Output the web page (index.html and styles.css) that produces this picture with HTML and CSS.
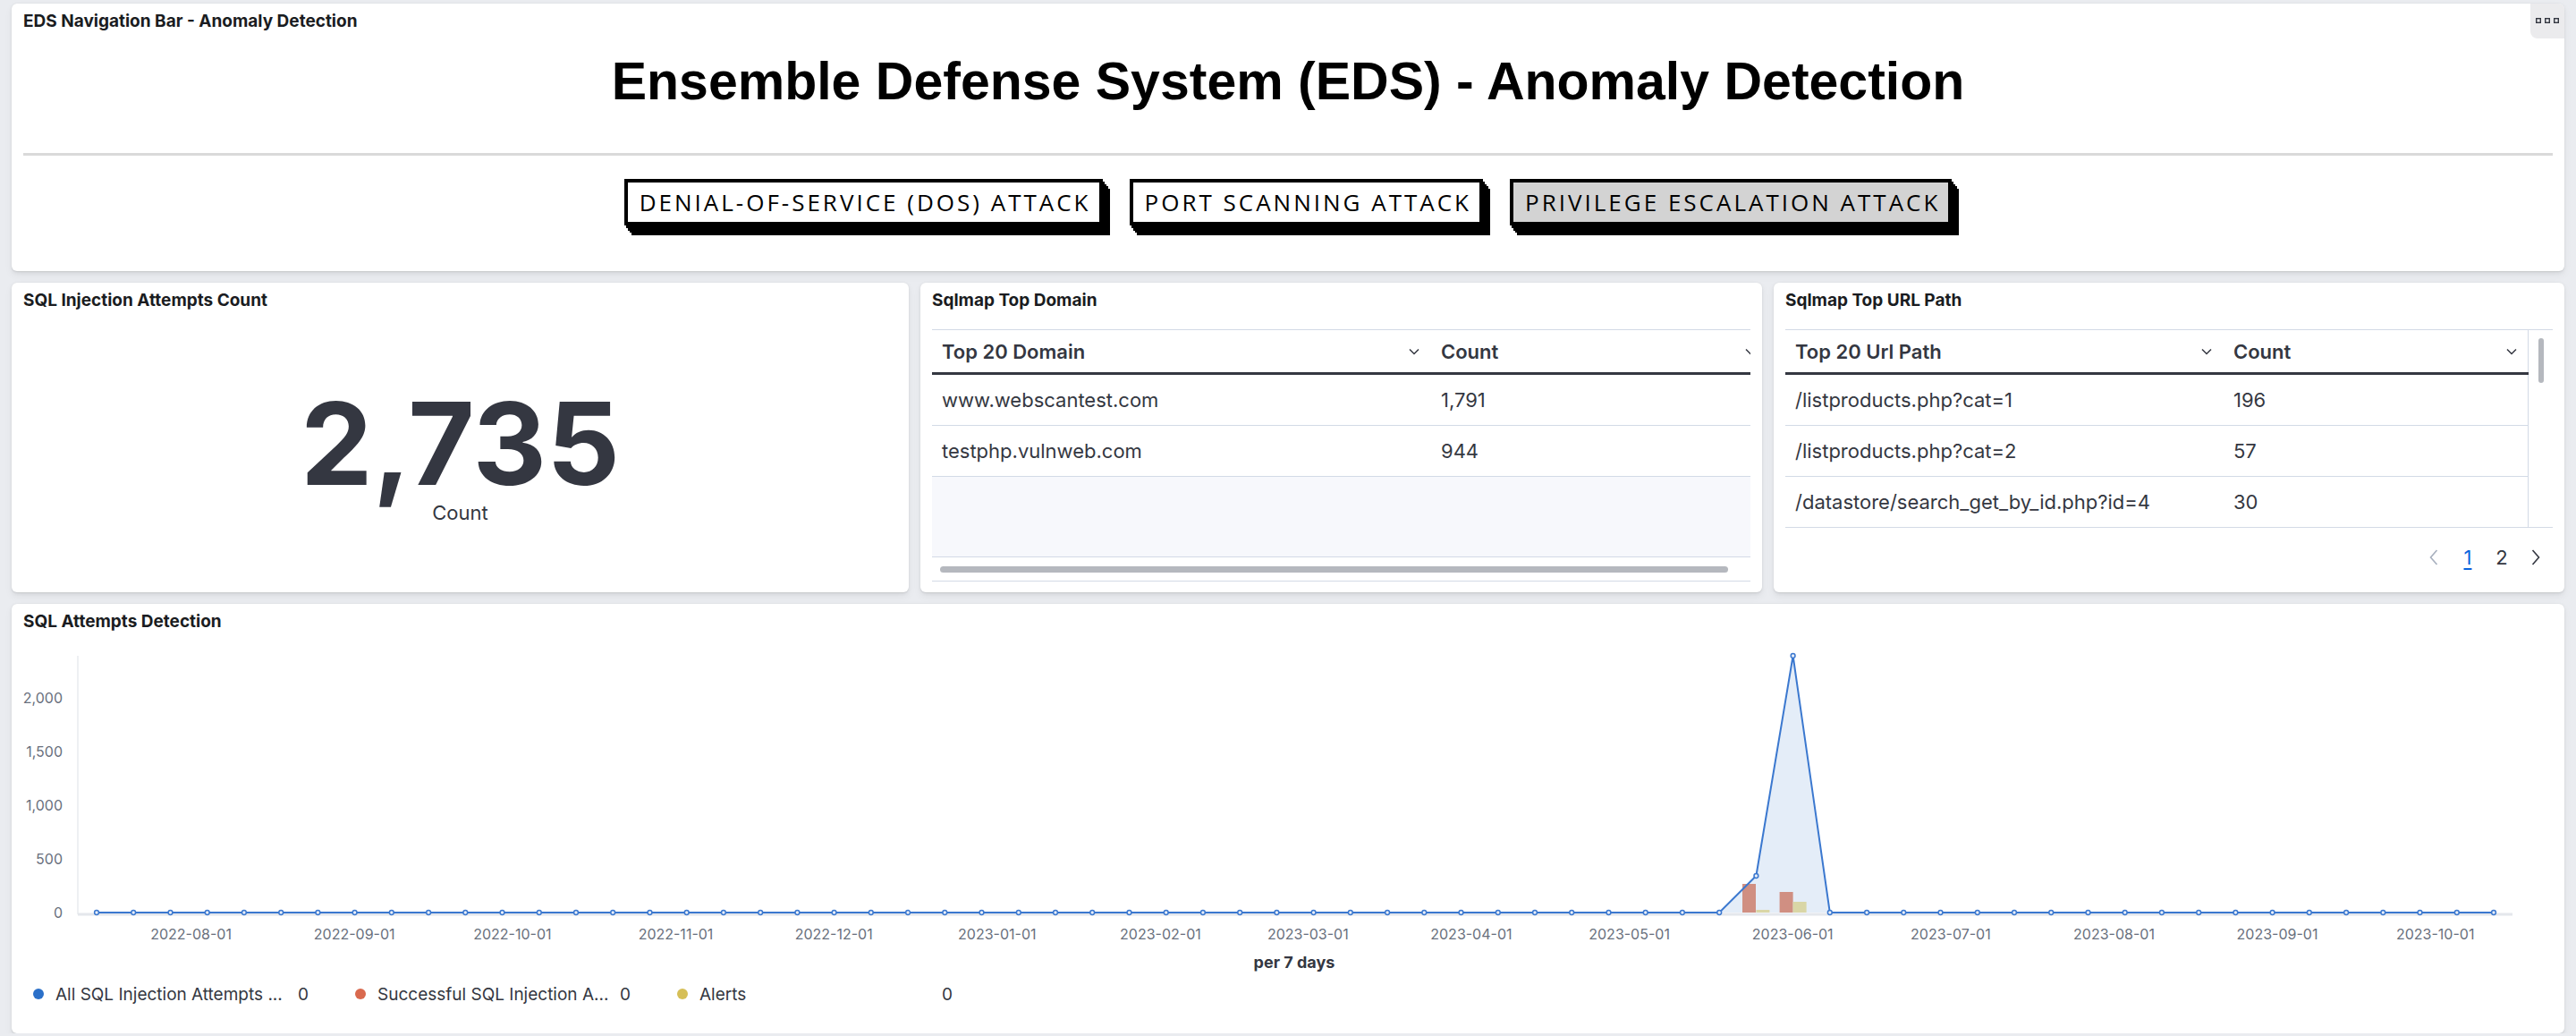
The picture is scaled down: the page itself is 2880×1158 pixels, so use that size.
FILE: index.html
```html
<!DOCTYPE html>
<html lang="en">
<head>
  <meta charset="UTF-8" />
  <meta name="viewport" content="width=device-width, initial-scale=1.0" />
  <title>EDS - Anomaly Detection</title>
  <link rel="stylesheet" href="styles.css">
</head>
<body>
  <div class="dashboard">

    <!-- navigation markdown panel -->
    <section class="panel nav-panel">
      <div class="panel-title">EDS Navigation Bar - Anomaly Detection</div>
      <button class="panel-menu" aria-label="Panel options">
        <svg width="26" height="6" viewBox="0 0 26 6">
          <rect x="0.7" y="0.7" width="4.6" height="4.6" fill="none" stroke="#343741" stroke-width="1.4"/>
          <rect x="10.7" y="0.7" width="4.6" height="4.6" fill="none" stroke="#343741" stroke-width="1.4"/>
          <rect x="20.7" y="0.7" width="4.6" height="4.6" fill="none" stroke="#343741" stroke-width="1.4"/>
        </svg>
      </button>
      <h1 class="nav-heading">Ensemble Defense System (EDS) - Anomaly Detection</h1>
      <hr class="nav-rule">
      <div class="nav-buttons">
        <a class="nav-btn" href="#">DENIAL-OF-SERVICE (DOS) ATTACK</a>
        <a class="nav-btn" href="#">PORT SCANNING ATTACK</a>
        <a class="nav-btn active" href="#">PRIVILEGE ESCALATION ATTACK</a>
      </div>
    </section>

    <div class="row">
      <!-- metric -->
      <section class="panel">
        <div class="panel-title">SQL Injection Attempts Count</div>
        <div class="metric">
          <div class="metric-value">2,735</div>
          <div class="metric-label">Count</div>
        </div>
      </section>

      <!-- top domain table -->
      <section class="panel">
        <div class="panel-title">Sqlmap Top Domain</div>
        <div class="grid-box domain-box">
          <div class="grid domain-grid">
            <div class="cell head">Top 20 Domain
              <svg class="chev" width="12" height="8" viewBox="0 0 12 8"><path d="M1 1.5l5 5 5-5" fill="none" stroke="#343741" stroke-width="1.5"/></svg>
            </div>
            <div class="cell head">Count
              <svg class="chev" width="12" height="8" viewBox="0 0 12 8"><path d="M1 1.5l5 5 5-5" fill="none" stroke="#343741" stroke-width="1.5"/></svg>
            </div>
            <div class="cell">www.webscantest.com</div>
            <div class="cell">1,791</div>
            <div class="cell">testphp.vulnweb.com</div>
            <div class="cell">944</div>
          </div>
          <div class="grid-empty"></div>
          <div class="hscroll"><span class="hscroll-thumb"></span></div>
        </div>
      </section>

      <!-- top url table -->
      <section class="panel">
        <div class="panel-title">Sqlmap Top URL Path</div>
        <div class="grid-box url-box">
          <div class="grid url-grid">
            <div class="cell head">Top 20 Url Path
              <svg class="chev" width="12" height="8" viewBox="0 0 12 8"><path d="M1 1.5l5 5 5-5" fill="none" stroke="#343741" stroke-width="1.5"/></svg>
            </div>
            <div class="cell head">Count
              <svg class="chev" width="12" height="8" viewBox="0 0 12 8"><path d="M1 1.5l5 5 5-5" fill="none" stroke="#343741" stroke-width="1.5"/></svg>
            </div>
            <div class="cell">/listproducts.php?cat=1</div>
            <div class="cell">196</div>
            <div class="cell">/listproducts.php?cat=2</div>
            <div class="cell">57</div>
            <div class="cell last">/datastore/search_get_by_id.php?id=4</div>
            <div class="cell last">30</div>
          </div>
          <div class="vscroll"><span class="vscroll-thumb"></span></div>
        </div>
        <div class="pager">
          <span class="pager-item disabled">
            <svg width="10" height="18" viewBox="0 0 10 18"><path d="M8.5 1L1.5 9l7 8" fill="none" stroke="currentColor" stroke-width="1.6"/></svg>
          </span>
          <span class="pager-item current">1</span>
          <span class="pager-item">2</span>
          <span class="pager-item">
            <svg width="10" height="18" viewBox="0 0 10 18"><path d="M1.5 1l7 8-7 8" fill="none" stroke="currentColor" stroke-width="1.6"/></svg>
          </span>
        </div>
      </section>
    </div>

    <!-- time series -->
    <section class="panel chart-panel">
      <div class="panel-title">SQL Attempts Detection</div>
      <svg class="chart" width="2854" height="389" viewBox="13 706 2854 389">
        <defs>
          <marker id="pt" viewBox="-4 -4 8 8" markerWidth="8" markerHeight="8" markerUnits="userSpaceOnUse">
            <circle r="2.4" fill="#e8eef8" stroke="#3b78cf" stroke-width="1.5"/>
          </marker>
        </defs>

        <line x1="87" y1="733" x2="87" y2="1022" stroke="#eef0f3" stroke-width="2"/>
        <line x1="87" y1="1022" x2="2809" y2="1022" stroke="#e4e7ec" stroke-width="3"/>

        <g class="axis-label" text-anchor="end">
          <text x="70" y="780" dominant-baseline="central">2,000</text>
          <text x="70" y="840" dominant-baseline="central">1,500</text>
          <text x="70" y="900" dominant-baseline="central">1,000</text>
          <text x="70" y="960" dominant-baseline="central">500</text>
          <text x="70" y="1020" dominant-baseline="central">0</text>
        </g>

        <polygon points="1922.2,1020 1963.4,979 2004.6,733 2045.8,1020" fill="#e4edf8"/>

        <rect x="1948" y="988" width="15" height="32" fill="#d08f82"/>
        <rect x="1963.4" y="1017" width="15" height="3" fill="#d9d6a6"/>
        <rect x="1989.6" y="997" width="15" height="23" fill="#d08f82"/>
        <rect x="2004.6" y="1008" width="15" height="12" fill="#d9d6a6"/>

        <polyline fill="none" stroke="#3b78cf" stroke-width="2" stroke-linejoin="round"
          marker-start="url(#pt)" marker-mid="url(#pt)" marker-end="url(#pt)"
          points="108,1020 149.2,1020 190.5,1020 231.7,1020 272.9,1020 314.2,1020 355.4,1020 396.6,1020 437.8,1020 479.1,1020
                  520.3,1020 561.5,1020 602.8,1020 644,1020 685.2,1020 726.5,1020 767.7,1020 808.9,1020 850.2,1020 891.4,1020
                  932.6,1020 973.8,1020 1015.1,1020 1056.3,1020 1097.5,1020 1138.8,1020 1180,1020 1221.2,1020 1262.5,1020 1303.7,1020
                  1344.9,1020 1386.2,1020 1427.4,1020 1468.6,1020 1509.8,1020 1551.1,1020 1592.3,1020 1633.5,1020 1674.8,1020 1716,1020
                  1757.2,1020 1798.5,1020 1839.7,1020 1880.9,1020 1922.2,1020 1963.4,979 2004.6,733 2045.8,1020 2087.1,1020 2128.3,1020
                  2169.5,1020 2210.8,1020 2252,1020 2293.2,1020 2334.5,1020 2375.7,1020 2416.9,1020 2458.2,1020 2499.4,1020 2540.6,1020
                  2581.8,1020 2623.1,1020 2664.3,1020 2705.5,1020 2746.8,1020 2788,1020"/>

        <g class="axis-label" text-anchor="middle">
          <text x="213.6" y="1044" dominant-baseline="central">2022-08-01</text>
          <text x="396.2" y="1044" dominant-baseline="central">2022-09-01</text>
          <text x="572.9" y="1044" dominant-baseline="central">2022-10-01</text>
          <text x="755.5" y="1044" dominant-baseline="central">2022-11-01</text>
          <text x="932.2" y="1044" dominant-baseline="central">2022-12-01</text>
          <text x="1114.8" y="1044" dominant-baseline="central">2023-01-01</text>
          <text x="1297.4" y="1044" dominant-baseline="central">2023-02-01</text>
          <text x="1462.3" y="1044" dominant-baseline="central">2023-03-01</text>
          <text x="1644.9" y="1044" dominant-baseline="central">2023-04-01</text>
          <text x="1821.6" y="1044" dominant-baseline="central">2023-05-01</text>
          <text x="2004.2" y="1044" dominant-baseline="central">2023-06-01</text>
          <text x="2180.9" y="1044" dominant-baseline="central">2023-07-01</text>
          <text x="2363.5" y="1044" dominant-baseline="central">2023-08-01</text>
          <text x="2546" y="1044" dominant-baseline="central">2023-09-01</text>
          <text x="2722.7" y="1044" dominant-baseline="central">2023-10-01</text>
        </g>
        <text class="axis-title" x="1447" y="1075" text-anchor="middle" dominant-baseline="central">per 7 days</text>
      </svg>

      <div class="legend">
        <div class="legend-item">
          <span class="legend-dot blue"></span>
          <span class="legend-name">All SQL Injection Attempts ...</span>
          <span class="legend-value">0</span>
        </div>
        <div class="legend-item">
          <span class="legend-dot red"></span>
          <span class="legend-name">Successful SQL Injection A...</span>
          <span class="legend-value">0</span>
        </div>
        <div class="legend-item">
          <span class="legend-dot yellow"></span>
          <span class="legend-name">Alerts</span>
          <span class="legend-value">0</span>
        </div>
      </div>
    </section>

  </div>
</body>
</html>
```

FILE: styles.css
```css
* {
  box-sizing: border-box;
}
body {
  margin: 0;
  background: #eaecf0;
  font-family: Inter, "Noto Sans", sans-serif;
  color: #343741;
}
.dashboard {
  padding: 4px 13px 0;
  display: flex;
  flex-direction: column;
  gap: 13px;
}
.panel {
  position: relative;
  background: #fff;
  border-radius: 6px;
  padding: 0 13px;
  box-shadow: 0 0.7px 1.4px rgba(0,0,0,0.07), 0 1.9px 4px rgba(0,0,0,0.05), 0 4.5px 10px rgba(0,0,0,0.05);
}
.panel-title {
  padding-top: 9px;
  font-size: 19px;
  line-height: 22px;
  font-weight: 700;
  color: #1a1c21;
}
.panel-menu {
  position: absolute;
  top: 0;
  right: 0;
  width: 38px;
  height: 39px;
  padding: 0 0 2px;
  border: none;
  border-radius: 0 6px 0 8px;
  background: #ebebed;
  display: flex;
  align-items: center;
  justify-content: center;
}

/* navigation */
.nav-panel {
  height: 299px;
}
.nav-heading {
  margin: 23px 0 0;
  text-align: center;
  font-family: "Liberation Sans", Arial, sans-serif;
  font-size: 59px;
  line-height: 66px;
  font-weight: 700;
  color: #000;
}
.nav-rule {
  margin: 47px 0 0;
  border: none;
  height: 3px;
  background: #dadada;
}
.nav-buttons {
  display: flex;
  justify-content: center;
  gap: 30px;
  margin-top: 26px;
}
.nav-btn {
  display: block;
  height: 52px;
  padding: 0 9px 0 13px;
  border: 4px solid #000;
  background: #fff;
  font-family: "Open Sans", sans-serif;
  font-size: 26px;
  line-height: 44px;
  letter-spacing: 3px;
  color: #000;
  text-decoration: none;
  box-shadow: 2px 3px 0 #000, 4px 6px 0 #000, 6px 8px 0 #000, 8px 11px 0 #000;
}
.nav-btn.active {
  background: #d3d3d3;
}

.row {
  display: grid;
  grid-template-columns: 1003px 941px 1fr;
  gap: 13px;
  height: 346px;
}

/* metric */
.metric {
  margin-top: 89px;
  text-align: center;
}
.metric-value {
  font-size: 128px;
  line-height: 120px;
  font-weight: 700;
  color: #343741;
}
.metric-label {
  margin-top: 4px;
  font-size: 22px;
  line-height: 26px;
}

/* data grids */
.grid-box {
  margin-top: 21px;
  border-top: 1px solid #d3dae6;
  overflow: hidden;
}
.grid {
  display: grid;
}
.domain-grid {
  grid-template-columns: 558px 376px;
  width: 934px;
}
.url-grid {
  grid-template-columns: 490px 341px;
  width: 831px;
  border-right: 1px solid #d3dae6;
}
.cell {
  height: 57px;
  padding: 0 11px;
  display: flex;
  align-items: center;
  font-size: 22px;
  border-bottom: 1px solid #d3dae6;
  white-space: nowrap;
}
.cell.head {
  height: 50px;
  justify-content: space-between;
  font-weight: 600;
  border-bottom: 3px solid #343741;
  padding-right: 13px;
}
.cell.last {
  border-bottom: none;
  height: 56px;
}
.grid-empty {
  height: 89px;
  background: #f7f8fc;
}
.hscroll {
  height: 28px;
  border-top: 1px solid #d3dae6;
  border-bottom: 1px solid #d3dae6;
  padding: 0 25px 0 9px;
  display: flex;
  align-items: center;
}
.hscroll-thumb {
  display: block;
  width: 100%;
  height: 7px;
  border-radius: 4px;
  background: #b5b8be;
}
.url-box {
  display: flex;
  border-bottom: 1px solid #d3dae6;
}
.vscroll {
  flex: 1;
  padding: 9px 0 0 11px;
}
.vscroll-thumb {
  display: block;
  width: 6px;
  height: 50px;
  border-radius: 3px;
  background: #b5b8be;
}
.pager {
  height: 66px;
  display: flex;
  justify-content: flex-end;
  align-items: center;
}
.pager-item {
  width: 38px;
  font-size: 22px;
  color: #343741;
  display: flex;
  justify-content: center;
  align-items: center;
}
.pager-item.disabled {
  color: #a7afbe;
}
.pager-item.current {
  color: #0b64dd;
  text-decoration: underline;
  text-underline-offset: 4px;
  text-decoration-thickness: 2px;
}

/* chart */
.chart-panel {
  height: 480px;
}
.chart {
  display: block;
  margin: 0 -13px;
}
.axis-label {
  font-family: Inter, sans-serif;
  font-size: 16px;
  fill: #69707d;
}
.axis-title {
  font-family: Inter, sans-serif;
  font-size: 18px;
  font-weight: 700;
  fill: #343741;
}
.legend {
  display: flex;
  height: 32px;
  align-items: center;
  padding-left: 11px;
}
.legend-item {
  display: grid;
  grid-template-columns: 12px 258px auto;
  column-gap: 13px;
  align-items: center;
  width: 360px;
  font-size: 19px;
}
.legend-item:last-child {
  width: auto;
}
.legend-dot {
  width: 12px;
  height: 12px;
  border-radius: 50%;
}
.legend-dot.blue { background: #2b70c9; }
.legend-dot.red { background: #d9694e; }
.legend-dot.yellow { background: #d6bf57; }
.legend-name {
  overflow: hidden;
  white-space: nowrap;
}
```
